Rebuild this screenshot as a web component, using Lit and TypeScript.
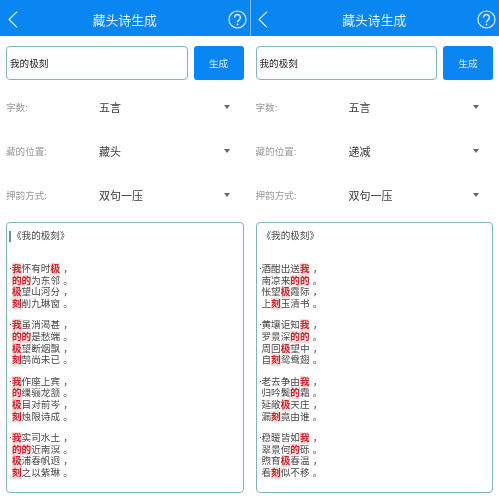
import { LitElement, html, css } from "lit";
import { customElement, property } from "lit/decorators.js";

type Line = [string, string];

const LEFT = [
  ["我怀有时极", "，"], ["的的为东邻", "。"], ["极望山河分", "，"], ["刻削九琳窗", "。"],
  ["我虽消渴甚", "，"], ["的的是愁端", "。"], ["极望断烟飘", "，"], ["刻鹄尚未已", "。"],
  ["我作座上宾", "，"], ["的缫骊龙颔", "。"], ["极目对前岑", "，"], ["刻烛限诗成", "。"],
  ["我实司水土", "，"], ["的的近南溟", "。"], ["极浦春帆迥", "，"], ["刻之以紫琳", "。"],
] as Line[];
const RIGHT = [
  ["酒酣出送我", "，"], ["南凉来的的", "。"], ["怅望极霞际", "，"], ["上刻玉清书", "。"],
  ["黄壤讵知我", "，"], ["罗景深的的", "。"], ["周回极望中", "，"], ["自刻鸳鸯翅", "。"],
  ["老去争由我", "，"], ["归吟鬓的霜", "。"], ["延敞极天庄", "，"], ["漏刻竟由谁", "。"],
  ["稳暖皆如我", "，"], ["翠景何的砾", "。"], ["煦育极春温", "，"], ["看刻似不移", "。"],
] as Line[];

@customElement("poem-panel")
class PoemPanel extends LitElement {
  @property() position = "";
  @property({ type: Array }) lines: Line[] = [];
  @property({ type: Boolean }) caret = false;

  static styles = css`
    :host { display: block; min-width: 0; background: #fff; color: #333;
      font-family: "Liberation Sans", "Noto Sans CJK SC", sans-serif; filter: blur(0.35px); }
    .bar { height: 36px; box-sizing: border-box; background: #0a86f2; display: grid;
      grid-template-columns: 1fr auto 1fr; align-items: center;
      padding: 3px 3px 0 3px; color: #e4f1fb; }
    .bar h1 { margin: 0; font-size: 12.8px; font-weight: 400; }
    .back { width: 10px; height: 17px; display: block; margin-left: 5px; }
    .help { width: 19px; height: 19px; display: block; justify-self: end; }
    .search { display: flex; gap: 6px; padding: 10px 6px 0; }
    .input { flex: 1; height: 34px; box-sizing: border-box; border: 1px solid #82b4bc;
      border-radius: 4px; display: flex; align-items: center; padding-left: 3px;
      font-size: 9.6px; color: #222; }
    .go { width: 50px; height: 34px; background: #0a86f2; color: #d5ecfb; border-radius: 3px;
      display: flex; align-items: center; justify-content: center; font-size: 9.6px; }
    .rows { padding: 5px 6px 0; }
    .row { display: grid; grid-template-columns: 93px 1fr auto; align-items: center;
      height: 44px; padding-right: 14px; }
    .row .label { font-size: 9.6px; color: #9a9a9a; }
    .row .value { font-size: 11px; color: #3a3a3a; }
    .arrow { width: 0; height: 0; border-left: 3px solid transparent;
      border-right: 3px solid transparent; border-top: 4px solid #666; }
    .poem { margin: 5px 6px 0; height: 271px; box-sizing: border-box; border: 1px solid #82b4bc;
      border-radius: 4px; padding: 6px 5px 0; font-size: 9.6px; color: #484848; }
    .title { line-height: 14px; height: 14px; display: flex; align-items: center; }
    .cursor { width: 2px; height: 11px; background: #5a9a96; margin: 0 1px 0 -3px; }
    .lines { margin-top: 20px; }
    .stanza { margin-bottom: 10px; }
    .line { height: 11.6px; line-height: 11.6px; white-space: nowrap; display: flex; position: relative; }
    .line span { width: 9.6px; flex: none; text-align: center; }
    .line .hi { color: #d0202a; background: #f6dcdc; font-weight: 700; }
    .line .end { width: 16px; text-align: center; }
    .dot { position: absolute; left: -2px; top: 5px; width: 1px; height: 1px; background: #444; }
    :host([divided]) .bar { border-left: 1px solid #7fbdf3; padding-left: 2px; }
  `;

  private renderLine(l: Line, i: number) {
    const special = "我的极刻";
    return html`<div class="line">
      ${i === 0 ? html`<i class="dot"></i>` : ""}
      ${[...l[0]].map((c) => html`<span class=${special.includes(c) ? "hi" : ""}>${c}</span>`)}
      <span class="end">${l[1]}</span>
    </div>`;
  }

  render() {
    const stanzas = [0, 4, 8, 12].map((s) => this.lines.slice(s, s + 4));
    return html`
      <div class="bar">
        <svg class="back" viewBox="0 0 10 17" fill="none" stroke="currentColor" stroke-width="1.1">
          <path d="M9 .7 L1 8.5 L9 16.3"></path>
        </svg>
        <h1>藏头诗生成</h1>
        <svg class="help" viewBox="0 0 19 19" fill="none" stroke="currentColor" stroke-width="1.2">
          <circle cx="9.5" cy="9.5" r="8.5"></circle>
          <path d="M6.6 7.4 a2.9 2.9 0 1 1 4.6 2.4 c-1.1 .7 -1.7 1.2 -1.7 2.5" stroke-width="1.4"></path>
          <circle cx="9.5" cy="14.4" r=".9" fill="currentColor" stroke="none"></circle>
        </svg>
      </div>
      <div class="search">
        <div class="input">我的极刻</div>
        <div class="go">生成</div>
      </div>
      <div class="rows">
        <div class="row"><span class="label">字数:</span><span class="value">五言</span><i class="arrow"></i></div>
        <div class="row"><span class="label">藏的位置:</span><span class="value">${this.position}</span><i class="arrow"></i></div>
        <div class="row"><span class="label">押韵方式:</span><span class="value">双句一压</span><i class="arrow"></i></div>
      </div>
      <div class="poem">
        <div class="title">${this.caret ? html`<i class="cursor"></i>` : ""}《我的极刻》</div>
        <div class="lines">
          ${stanzas.map((s) => html`<div class="stanza">${s.map((l, i) => this.renderLine(l, i))}</div>`)}
        </div>
      </div>
    `;
  }
}

@customElement("app-root")
class AppRoot extends LitElement {
  static styles = css`
    :host { display: grid; grid-template-columns: 1fr 1fr; width: 499px; height: 500px; background: #fff; overflow: hidden; }
  `;
  render() {
    return html`
      <poem-panel position="藏头" .lines=${LEFT} caret></poem-panel>
      <poem-panel position="递减" .lines=${RIGHT} divided></poem-panel>
    `;
  }
}
